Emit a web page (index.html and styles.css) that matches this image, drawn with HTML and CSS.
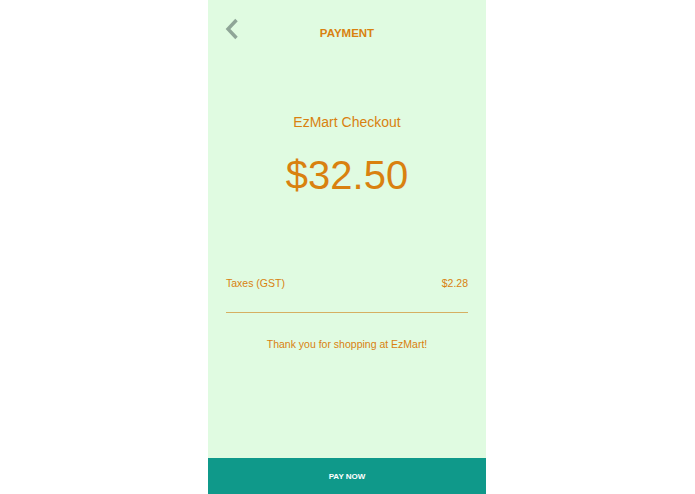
FILE: index.html
```html
<!DOCTYPE html>
<html>
<head>
	<title>Payment</title>
	<link rel="stylesheet" href="styles.css">
</head>
<body>
	<div class="phone">
		<div class="header">
			<span class="back">
				<svg width="14" height="22" viewBox="0 0 14 22"><path d="M11.5 2 L3 11 L11.5 20" fill="none" stroke="#8fa597" stroke-width="3.4"/></svg>
			</span>
			<span class="title">PAYMENT</span>
		</div>
		<div class="store">EzMart Checkout</div>
		<div class="amount">$32.50</div>
		<div class="row">
			<span>Taxes (GST)</span>
			<span>$2.28</span>
		</div>
		<div class="divider"></div>
		<div class="thanks">Thank you for shopping at EzMart!</div>
		<div class="pay">PAY NOW</div>
	</div>
</body>
</html>
```

FILE: styles.css
```css
body {
	margin: 0;
	background: #fff;
	font-family: "Liberation Sans", Arial, sans-serif;
}
.phone {
	width: 278px;
	height: 494px;
	margin: 0 auto;
	position: relative;
	left: -0.5px;
	background: #e0fbe1;
	display: flex;
	flex-direction: column;
	color: #d9810f;
}
.header {
	height: 62px;
	display: flex;
	align-items: center;
	justify-content: center;
	position: relative;
}
.back {
	position: absolute;
	left: 17px;
	top: 18px;
}
.title {
	font-size: 11.5px;
	font-weight: bold;
	margin-top: 4px;
}
.store {
	text-align: center;
	font-size: 14px;
	margin-top: 52px;
}
.amount {
	text-align: center;
	font-size: 40px;
	margin-top: 23px;
}
.row {
	display: flex;
	justify-content: space-between;
	font-size: 10.5px;
	margin: 79px 18px 0 18px;
}
.divider {
	height: 1px;
	background: #d6af62;
	margin: 23px 18px 0 18px;
}
.thanks {
	text-align: center;
	font-size: 10.5px;
	margin-top: 25px;
}
.pay {
	margin-top: auto;
	height: 36px;
	background: #0f998a;
	color: #fff;
	font-size: 8px;
	font-weight: bold;
	display: flex;
	align-items: center;
	justify-content: center;
}
```
